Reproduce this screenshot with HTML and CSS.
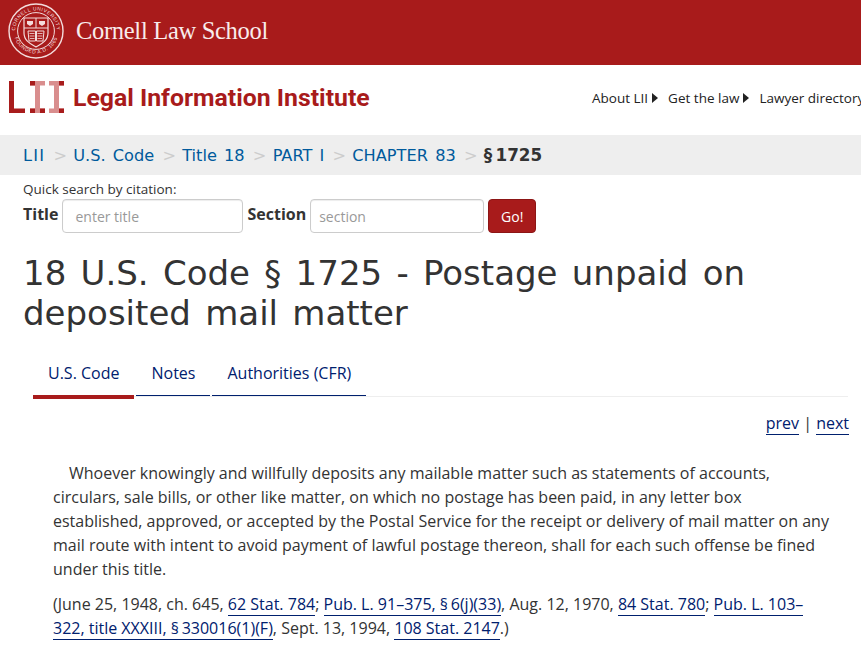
FILE: index.html
```html
<!DOCTYPE html>
<html lang="en">
<head>
    <meta charset="UTF-8">
    <meta name="viewport" content="width=device-width, initial-scale=1.0">
    <title>18 U.S. Code § 1725 - Postage unpaid on deposited mail matter</title>
    <link rel="stylesheet" href="styles.css">
</head>
<body>
    <div class="cornell-bar">
        <svg class="seal" viewBox="0 0 56 56" width="56" height="56" aria-hidden="true">
            <defs>
                <path id="seal-top" d="M7.5 33 A21 21 0 1 1 48.5 33"/>
                <path id="seal-bottom" d="M6 33 A22.6 22.6 0 0 0 50 33"/>
            </defs>
            <circle cx="28" cy="28" r="27" fill="none" stroke="#f3dcdc" stroke-width="1.4"/>
            <circle cx="28" cy="28" r="18.4" fill="none" stroke="#f3dcdc" stroke-width="1"/>
            <text class="seal-text"><textPath href="#seal-top" startOffset="50%" text-anchor="middle">CORNELL UNIVERSITY</textPath></text>
            <text class="seal-text"><textPath href="#seal-bottom" startOffset="50%" text-anchor="middle">FOUNDED A.D. 1865</textPath></text>
            <path d="M16 15 H40 V30 C40 38 33 41 28 44 C23 41 16 38 16 30 Z" fill="none" stroke="#f3dcdc" stroke-width="1.2"/>
            <path d="M16 25 H40 M28 15 V25" stroke="#f3dcdc" stroke-width="1"/>
            <path d="M19 18 H25 V21 L22 23 L19 21 Z M31 18 H37 V21 L34 23 L31 21 Z" fill="#f3dcdc"/>
            <path d="M20 28 H27.5 V38 H21 Z M28.5 28 H36 L35 38 H28.5 Z" fill="none" stroke="#f3dcdc" stroke-width="1"/>
            <path d="M21.5 30.5 H26.5 M21.5 33 H26.5 M22 35.5 H26.5 M29.5 30.5 H34.5 M29.5 33 H34.5 M29.5 35.5 H34" stroke="#f3dcdc" stroke-width=".8"/>
        </svg>
        <span class="cornell-name">Cornell Law School</span>
    </div>

    <div class="lii-bar">
        <div class="lii-logo">
            <svg viewBox="0 0 55 32" width="55" height="32" aria-hidden="true">
                <path d="M0 0 H5 V27.500 H16 V32 H0 Z" fill="#a81c1c"/>
                <path d="M21 0 H36 V4.500 H31 V27.500 H36 V32 H21 V27.500 H26 V4.500 H21 Z" fill="#d98e8e"/>
                <path d="M40 0 H55 V4.500 H50 V27.500 H55 V32 H40 V27.500 H45 V4.500 H40 Z" fill="#d98e8e"/>
                <path d="M21 0 H26 V4.500 H21 Z M21 27.500 H26 V32 H21 Z M31 27.500 H36 V32 H31 Z M50 0 H55 V4.500 H50 Z M50 27.500 H55 V32 H50 Z" fill="#a81c1c"/>
            </svg>
            <span class="lii-name">Legal Information Institute</span>
        </div>
        <ul class="lii-nav">
            <li><a href="#">About LII</a></li>
            <li><a href="#">Get the law</a></li>
            <li><a href="#">Lawyer directory</a></li>
        </ul>
    </div>

    <div class="breadcrumb">
        <a class="crumb-lii" href="#">LII</a><span class="sep">&gt;</span><a href="#">U.S. Code</a><span class="sep">&gt;</span><a href="#">Title 18</a><span class="sep">&gt;</span><a href="#">PART I</a><span class="sep">&gt;</span><a href="#">CHAPTER 83</a><span class="sep">&gt;</span><strong>§&thinsp;1725</strong>
    </div>

    <form class="quick-search">
        <div class="quick-label">Quick search by citation:</div>
        <div class="quick-row">
            <label for="title">Title</label>
            <input class="input-title" type="text" id="title" placeholder="enter title">
            <label for="section">Section</label>
            <input class="input-section" type="text" id="section" placeholder="section">
            <button type="button" class="go">Go!</button>
        </div>
    </form>

    <h1>18 U.S. Code § 1725 - Postage unpaid on deposited mail matter</h1>

    <div class="tabs">
        <a class="tab active" href="#">U.S. Code</a>
        <a class="tab" href="#">Notes</a>
        <a class="tab" href="#">Authorities (CFR)</a>
    </div>

    <div class="pager"><a href="#">prev</a> | <a href="#">next</a></div>

    <div class="statute">
        <p class="indent">Whoever knowingly and willfully deposits any mailable matter such as statements of accounts, circulars, sale bills, or other like matter, on which no postage has been paid, in any letter box established, approved, or accepted by the Postal Service for the receipt or delivery of mail matter on any mail route with intent to avoid payment of lawful postage thereon, shall for each such offense be fined under this title.</p>
        <p>(June 25, 1948, ch. 645, <a href="#">62 Stat. 784</a>; <a href="#">Pub. L. 91–375, §&thinsp;6(j)(33)</a>, Aug. 12, 1970, <a href="#">84 Stat. 780</a>; <a href="#">Pub. L. 103–322, title XXXIII, §&thinsp;330016(1)(F)</a>, Sept. 13, 1994, <a href="#">108 Stat. 2147</a>.)</p>
    </div>
</body>
</html>
```

FILE: styles.css
```css
body {
    margin: 0;
    font-family: "Open Sans", sans-serif;
    font-size: 16px;
    color: #333;
    background: #fff;
    overflow-x: hidden;
}

a {
    text-decoration: none;
}

/* Cornell bar */
.cornell-bar {
    display: flex;
    align-items: center;
    gap: 12px;
    height: 61px;
    padding: 0 0 4px 8px;
    background: #a81b1b;
}

.seal {
    flex: none;
}

.seal-text {
    font-family: "Liberation Sans", sans-serif;
    font-size: 5px;
    letter-spacing: 0.5px;
    fill: #f3dcdc;
}

.cornell-name {
    font-family: "Liberation Serif", serif;
    font-size: 24.5px;
    letter-spacing: -0.3px;
    color: #f8ecec;
}

/* LII bar */
.lii-bar {
    display: flex;
    align-items: center;
    justify-content: space-between;
    height: 70px;
    padding-left: 9px;
    overflow: hidden;
}

.lii-logo {
    display: flex;
    align-items: center;
    gap: 9px;
    margin-top: -6px;
}

.lii-name {
    font-family: Roboto, sans-serif;
    font-weight: 700;
    font-size: 24.8px;
    color: #a81b1b;
    white-space: nowrap;
}

.lii-nav {
    display: flex;
    flex: none;
    width: 269px;
    gap: 10px;
    margin: -5px 0 0;
    padding: 0;
    list-style: none;
    font-size: 13.5px;
    white-space: nowrap;
}

.lii-nav a {
    color: #222;
}

.lii-nav li:not(:last-child)::after {
    content: "";
    display: inline-block;
    margin-left: 4px;
    border-left: 6px solid #222;
    border-top: 5px solid transparent;
    border-bottom: 5px solid transparent;
}

/* Breadcrumb */
.breadcrumb {
    height: 40px;
    line-height: 41px;
    padding-left: 23px;
    background: #eee;
    font-family: "DejaVu Sans", sans-serif;
    font-size: 16.2px;
    word-spacing: 2px;
    white-space: nowrap;
}

.breadcrumb a {
    color: #005a9c;
}

.breadcrumb .crumb-lii {
    letter-spacing: 1.2px;
}

.breadcrumb .sep {
    display: inline-block;
    width: 28px;
    padding-left: 2px;
    box-sizing: border-box;
    text-align: center;
    color: #ccc;
}

.breadcrumb strong {
    color: #333;
    font-size: 16.8px;
}

/* Quick search */
.quick-search {
    padding: 5px 0 0 23px;
}

.quick-label {
    font-size: 13.5px;
    line-height: 18px;
    color: #333;
}

.quick-row {
    display: flex;
    align-items: center;
    margin-top: 1px;
}

.quick-row label {
    font-size: 16px;
    font-weight: 700;
    margin-top: -5px;
}

.quick-row input {
    box-sizing: border-box;
    height: 34px;
    padding: 0 12px;
    border: 1px solid #ccc;
    border-radius: 4px;
    font-family: "Open Sans", sans-serif;
    font-size: 14px;
    color: #333;
    box-shadow: inset 0 1px 1px rgba(0, 0, 0, 0.075);
}

.quick-row input::placeholder {
    color: #999;
}

.input-title {
    width: 181px;
    margin: 0 4px;
}

.input-section {
    width: 174px;
    margin: 0 4px;
    padding-left: 8px !important;
}

.go {
    height: 34px;
    width: 48px;
    padding: 0;
    border: 1px solid #8c1515;
    border-radius: 4px;
    background: #a81b1b;
    color: #fff;
    font-family: "Open Sans", sans-serif;
    font-size: 14px;
}

/* Heading */
h1 {
    margin: 20px 0 0;
    padding: 0 90px 0 23px;
    font-family: "DejaVu Sans", sans-serif;
    font-weight: 400;
    font-size: 34px;
    word-spacing: 3.5px;
    line-height: 40px;
    color: #333;
}

/* Tabs */
.tabs {
    display: flex;
    gap: 2px;
    margin: 21px 13px 0 33px;
    border-bottom: 1px solid #eee;
}

.tab {
    box-sizing: border-box;
    height: 42px;
    margin-bottom: -1px;
    padding: 8px 15px 0;
    font-size: 16px;
    color: #00206e;
    border-bottom: 1px solid #00206e;
}

.tab.active {
    height: 45px;
    margin-bottom: -3px;
    border-bottom: 4px solid #a81b1b;
}

/* Pager */
.pager {
    margin-top: 14px;
    padding-right: 12px;
    text-align: right;
    line-height: 24px;
}

.pager a,
.statute a {
    color: #00206e;
    border-bottom: 1px solid #00206e;
}

/* Statute text */
.statute {
    margin: 26px 29px 0 53px;
    line-height: 24px;
}

.statute p {
    margin: 0 0 11px;
}

.statute .indent {
    text-indent: 16px;
}
```
